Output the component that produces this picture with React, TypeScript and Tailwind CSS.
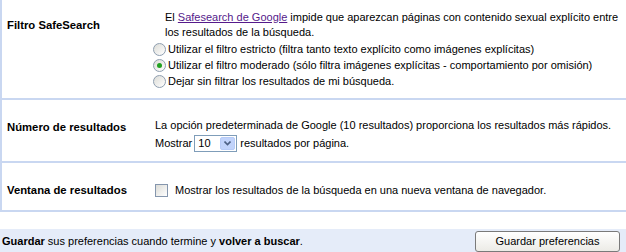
import React, { useState } from 'react';

function Radio(props: { checked?: boolean }) {
  return (
    <span className="inline-flex w-[13px] h-[13px] shrink-0 items-center justify-center rounded-full border border-[#8e9eb0] bg-gradient-to-br from-[#dcdcd7] to-white">
      {props.checked && <span className="w-[5px] h-[5px] rounded-full bg-[#21a121]" />}
    </span>
  );
}

export default function App() {
  const [filter, setFilter] = useState('moderado');
  const [count, setCount] = useState('10');

  const options = [
    { key: 'estricto', text: 'Utilizar el filtro estricto (filtra tanto texto explícito como imágenes explícitas)' },
    { key: 'moderado', text: 'Utilizar el filtro moderado (sólo filtra imágenes explícitas - comportamiento por omisión)' },
    { key: 'ninguno', text: 'Dejar sin filtrar los resultados de mi búsqueda.' },
  ];

  return (
    <div className="w-[626px] h-[252px] bg-white text-[11px] leading-[15px] text-black overflow-hidden" style={{ fontFamily: '"Liberation Sans", Arial, sans-serif' }}>
      <div className="border-l-2 border-b-2 border-[#c9d7f1]">
        {/* SafeSearch */}
        <div className="flex h-[100px] border-b-2 border-[#c9d7f1]">
          <div className="w-[151px] shrink-0 pl-[5px] pt-[18px] font-bold text-[11.3px]">Filtro SafeSearch</div>
          <div className="pt-[10px]">
            <div className="pl-[12px]">
              El <a href="#" className="text-[#551a8b] underline">Safesearch de Google</a> impide que aparezcan páginas con contenido sexual explícito entre los resultados de la búsqueda.
            </div>
            <div className="mt-[1px]">
              {options.map((o) => (
                <div key={o.key} className="flex items-center gap-[2px] h-[16px]" onClick={() => setFilter(o.key)}>
                  <Radio checked={filter === o.key} />
                  <span>{o.text}</span>
                </div>
              ))}
            </div>
          </div>
        </div>

        {/* Numero de resultados */}
        <div className="flex h-[63px] border-b-2 border-[#c9d7f1]">
          <div className="w-[151px] shrink-0 pl-[5px] pt-[20px] font-bold text-[11.3px]">Número de resultados</div>
          <div className="pt-[18px] pl-[2px]">
            <div>La opción predeterminada de Google (10 resultados) proporciona los resultados más rápidos.</div>
            <div className="flex items-center mt-[2px]">
              <span>Mostrar</span>
              <span className="relative ml-[2px] mr-[3px] inline-flex items-center w-[43px] h-[17px] border border-[#7f9db9] bg-white">
                <select value={count} onChange={(e) => setCount(e.target.value)} className="appearance-none w-full h-full pl-[3px] bg-transparent outline-none text-[11px] leading-[15px]">
                  <option>10</option>
                  <option>20</option>
                  <option>30</option>
                  <option>50</option>
                  <option>100</option>
                </select>
                <span className="absolute right-[1px] top-[1px] w-[15px] h-[13px] rounded-[2px] border border-[#b7cbf7] bg-[#c1d3fb] flex items-center justify-center pointer-events-none">
                  <svg width="7" height="5" viewBox="0 0 7 5"><path d="M0.5 0.5 L3.5 3.5 L6.5 0.5" stroke="#4d6185" strokeWidth="1.6" fill="none" /></svg>
                </span>
              </span>
              <span>resultados por página.</span>
            </div>
          </div>
        </div>

        {/* Ventana de resultados */}
        <div className="flex h-[47px]">
          <div className="w-[151px] shrink-0 pl-[5px] pt-[20px] font-bold text-[11.3px]">Ventana de resultados</div>
          <div className="pt-[20px] pl-[2px] flex items-start">
            <span className="mt-[1px] w-[13px] h-[13px] border border-[#8596ad] bg-gradient-to-br from-[#dcdcd7] to-white" />
            <span className="ml-[7px]">Mostrar los resultados de la búsqueda en una nueva ventana de navegador.</span>
          </div>
        </div>
      </div>

      {/* Barra inferior */}
      <div className="mt-[17px] h-[23px] bg-[#e5ecf9] flex items-center justify-between pl-[2px] pr-[6px]">
        <div className="pt-[1px]"><b>Guardar</b> sus preferencias cuando termine y <b>volver a buscar</b>.</div>
        <button className="self-end w-[145px] h-[21px] rounded-[3px] border border-[#7a7a7a] bg-gradient-to-b from-white to-[#ecebe6] text-[11px]">Guardar preferencias</button>
      </div>
    </div>
  );
}
